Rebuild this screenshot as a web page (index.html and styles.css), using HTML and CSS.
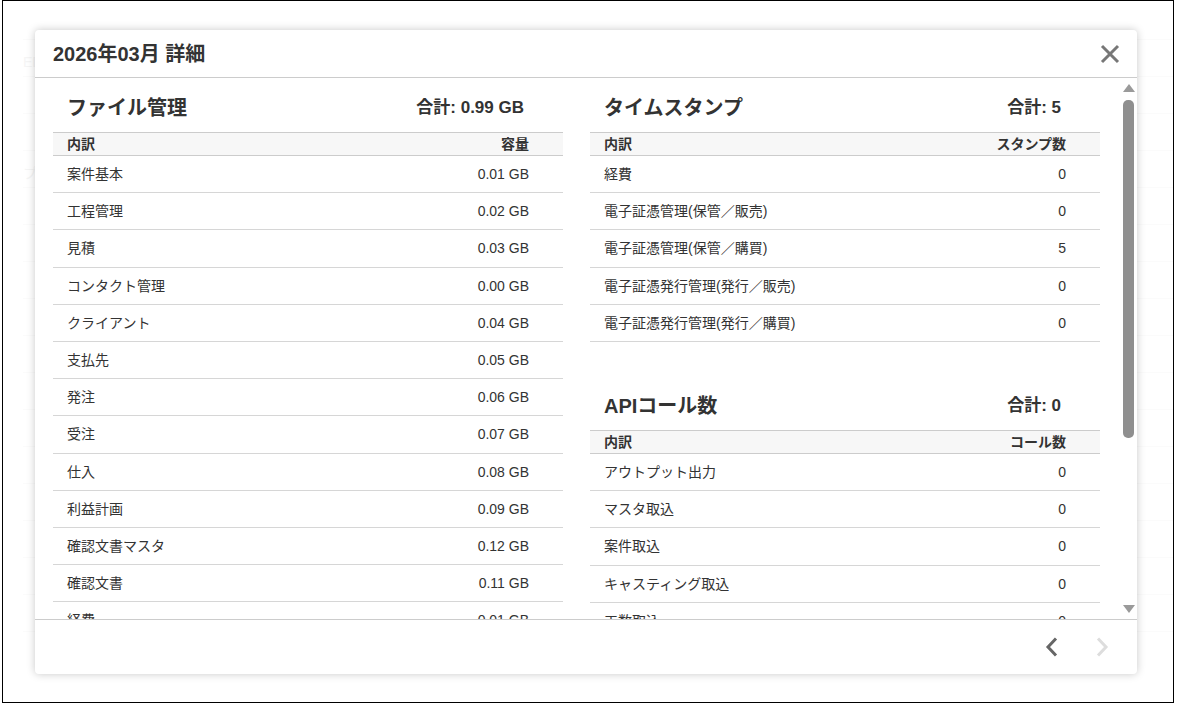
FILE: index.html
```html
<!DOCTYPE html>
<html lang="ja">
<head>
<meta charset="utf-8">
<title>2026年03月 詳細</title>
<link rel="stylesheet" href="styles.css">
</head>
<body>
<div class="frame">

<!-- page behind the dialog -->
<div class="page">
  <div class="page-row"></div>
  <div class="page-row"><span class="page-label">ED</span></div>
  <div class="page-row"></div>
  <div class="page-row"></div>
  <div class="page-row"><span class="page-label">プ</span></div>
  <div class="page-row"></div>
  <div class="page-row"></div>
  <div class="page-row"></div>
  <div class="page-row"></div>
  <div class="page-row"></div>
  <div class="page-row"></div>
  <div class="page-row"></div>
  <div class="page-row"></div>
  <div class="page-row"></div>
  <div class="page-row"></div>
  <div class="page-row"></div>
  <div class="page-row"></div>
</div>

<div class="overlay">
<div class="modal">
  <div class="modal-header">
    <h1 class="modal-title">2026年03月 詳細</h1>
    <button class="close" type="button" aria-label="閉じる">
      <svg width="20" height="20" viewBox="0 0 20 20"><path d="M2 2 L18 18 M18 2 L2 18" stroke="#777" stroke-width="3" fill="none"/></svg>
    </button>
  </div>

  <div class="modal-body">
    <div class="body-scroll">
      <div class="columns">

        <div class="col">
          <section class="usage">
            <div class="usage-head"><h2 class="usage-title">ファイル管理</h2><span class="usage-total">合計: 0.99 GB</span></div>
            <div class="usage-table">
              <div class="usage-row usage-row-head"><span>内訳</span><span>容量</span></div>
              <div class="usage-row"><span>案件基本</span><span>0.01 GB</span></div>
              <div class="usage-row"><span>工程管理</span><span>0.02 GB</span></div>
              <div class="usage-row"><span>見積</span><span>0.03 GB</span></div>
              <div class="usage-row"><span>コンタクト管理</span><span>0.00 GB</span></div>
              <div class="usage-row"><span>クライアント</span><span>0.04 GB</span></div>
              <div class="usage-row"><span>支払先</span><span>0.05 GB</span></div>
              <div class="usage-row"><span>発注</span><span>0.06 GB</span></div>
              <div class="usage-row"><span>受注</span><span>0.07 GB</span></div>
              <div class="usage-row"><span>仕入</span><span>0.08 GB</span></div>
              <div class="usage-row"><span>利益計画</span><span>0.09 GB</span></div>
              <div class="usage-row"><span>確認文書マスタ</span><span>0.12 GB</span></div>
              <div class="usage-row"><span>確認文書</span><span>0.11 GB</span></div>
              <div class="usage-row"><span>経費</span><span>0.01 GB</span></div>
            </div>
          </section>
        </div>

        <div class="col">
          <section class="usage">
            <div class="usage-head"><h2 class="usage-title">タイムスタンプ</h2><span class="usage-total">合計: 5</span></div>
            <div class="usage-table">
              <div class="usage-row usage-row-head"><span>内訳</span><span>スタンプ数</span></div>
              <div class="usage-row"><span>経費</span><span>0</span></div>
              <div class="usage-row"><span>電子証憑管理(保管／販売)</span><span>0</span></div>
              <div class="usage-row"><span>電子証憑管理(保管／購買)</span><span>5</span></div>
              <div class="usage-row"><span>電子証憑発行管理(発行／販売)</span><span>0</span></div>
              <div class="usage-row"><span>電子証憑発行管理(発行／購買)</span><span>0</span></div>
            </div>
          </section>

          <section class="usage usage-next">
            <div class="usage-head"><h2 class="usage-title">APIコール数</h2><span class="usage-total">合計: 0</span></div>
            <div class="usage-table">
              <div class="usage-row usage-row-head"><span>内訳</span><span>コール数</span></div>
              <div class="usage-row"><span>アウトプット出力</span><span>0</span></div>
              <div class="usage-row"><span>マスタ取込</span><span>0</span></div>
              <div class="usage-row"><span>案件取込</span><span>0</span></div>
              <div class="usage-row"><span>キャスティング取込</span><span>0</span></div>
              <div class="usage-row"><span>工数取込</span><span>0</span></div>
            </div>
          </section>
        </div>

      </div>
    </div>

    <div class="scrollbar">
      <div class="scroll-up"></div>
      <div class="scroll-thumb"></div>
      <div class="scroll-track"></div>
      <div class="scroll-down"></div>
    </div>
  </div>

  <div class="modal-footer">
    <button class="pager" type="button" aria-label="前へ">
      <svg width="16" height="20" viewBox="0 0 16 20"><path d="M12 1.5 L4 10 L12 18.5" stroke="#666" stroke-width="3" fill="none"/></svg>
    </button>
    <button class="pager" type="button" aria-label="次へ" disabled>
      <svg width="16" height="20" viewBox="0 0 16 20"><path d="M4 1.5 L12 10 L4 18.5" stroke="#ddd" stroke-width="3" fill="none"/></svg>
    </button>
  </div>
</div>
</div>

</div>
</body>
</html>
```

FILE: styles.css
```css
/* Usage detail dialog
*/

body
{ margin: 0;
background-color: #fff;
font-family: "Liberation Sans", "Noto Sans CJK JP", sans-serif;
color: #333;
}

div.frame
{ position: relative;
width: 1170px;
height: 701px;
margin-left: 2px;
border: 1px solid #000;
overflow: hidden;
}

/* Page behind the dialog */

div.page
{ padding: 2px 0 0 20px;
}

div.page-row
{ height: 36px;
border-bottom: 1px solid #f4f4f4;
}

span.page-label
{ display: block;
padding-top: 12px;
font-size: 14px;
line-height: 20px;
color: #e6e6e6;
}

div.overlay
{ position: absolute;
top: 0; left: 0; right: 0; bottom: 0;
padding: 29px 0 0 32px;
background-color: rgba(255,255,255,0.6);
}

/* Dialog */

div.modal
{ width: 1102px;
height: 644px;
display: flex;
flex-direction: column;
background-color: #fff;
border-radius: 4px;
box-shadow: 0 0 8px rgba(0,0,0,0.22);
overflow: hidden;
}

div.modal-header
{ height: 47px;
flex: none;
display: flex;
align-items: center;
justify-content: space-between;
padding: 0 17px 0 18px;
border-bottom: 1px solid #ccc;
}

h1.modal-title
{ margin: 0;
font-size: 20px;
line-height: 24px;
font-weight: bold;
color: #333;
}

button.close, button.pager
{ border: 0;
padding: 0;
background: none;
display: flex;
cursor: pointer;
}

div.modal-body
{ flex: 1;
display: flex;
min-height: 0;
}

div.body-scroll
{ flex: 1;
overflow: hidden;
padding-left: 18px;
}

div.columns
{ display: grid;
grid-template-columns: 510px 510px;
column-gap: 27px;
align-items: start;
}

/* Usage sections */

div.usage-head
{ display: flex;
justify-content: space-between;
align-items: center;
padding: 18px 39px 12px 14px;
}

h2.usage-title
{ margin: 0;
font-size: 20px;
line-height: 24px;
font-weight: bold;
}

span.usage-total
{ font-size: 17px;
font-weight: bold;
line-height: 24px;
}

section.usage-next
{ margin-top: 34px;
}

div.usage-row
{ display: flex;
justify-content: space-between;
align-items: center;
height: 36.2px;
padding: 0 34px 0 14px;
border-bottom: 1px solid #d6d6d6;
font-size: 14px;
line-height: 20px;
}

div.usage-row-head
{ height: 22px;
border-top: 1px solid #ccc;
border-bottom: 1px solid #ccc;
background-color: #f7f7f7;
font-weight: bold;
}

/* Scrollbar */

div.scrollbar
{ width: 17px;
flex: none;
display: flex;
flex-direction: column;
align-items: center;
padding: 6px 0 6px 0;
box-sizing: border-box;
}

div.scroll-up
{ width: 0; height: 0;
border-left: 6px solid transparent;
border-right: 6px solid transparent;
border-bottom: 8px solid #9a9a9a;
}

div.scroll-thumb
{ width: 11px;
height: 338px;
margin-top: 8px;
border-radius: 5px;
background-color: #8f8f8f;
}

div.scroll-track
{ flex: 1;
}

div.scroll-down
{ width: 0; height: 0;
border-left: 6px solid transparent;
border-right: 6px solid transparent;
border-top: 8px solid #9a9a9a;
}

/* Footer */

div.modal-footer
{ height: 54px;
flex: none;
display: flex;
justify-content: flex-end;
align-items: center;
gap: 34px;
padding-right: 27px;
border-top: 1px solid #ccc;
}
```
